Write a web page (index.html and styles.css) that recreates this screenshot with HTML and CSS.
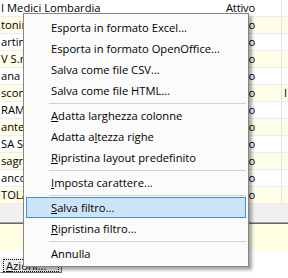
FILE: index.html
```html
<!DOCTYPE html>
<html lang="it">
<head>
    <meta charset="UTF-8">
    <title>Elenco clienti</title>
    <link rel="stylesheet" href="styles.css">
</head>
<body>
    <div class="grid">
        <div class="row"><span class="cell name">I Medici Lombardia</span><span class="cell state">Attivo</span><span class="cell extra"></span></div>
        <div class="row odd"><span class="cell name">toninelli Srl</span><span class="cell state">Attivo</span><span class="cell extra"></span></div>
        <div class="row"><span class="cell name">artina Spa</span><span class="cell state">Attivo</span><span class="cell extra"></span></div>
        <div class="row odd"><span class="cell name">V S.r.l.</span><span class="cell state">Attivo</span><span class="cell extra"></span></div>
        <div class="row"><span class="cell name">ana Sas</span><span class="cell state">Attivo</span><span class="cell extra"></span></div>
        <div class="row odd"><span class="cell name">sconti</span><span class="cell state">Attivo</span><span class="cell extra">I</span></div>
        <div class="row"><span class="cell name">RAMI</span><span class="cell state">Attivo</span><span class="cell extra"></span></div>
        <div class="row odd"><span class="cell name">anteghini</span><span class="cell state">Attivo</span><span class="cell extra"></span></div>
        <div class="row"><span class="cell name">SA Srl</span><span class="cell state">Attivo</span><span class="cell extra"></span></div>
        <div class="row odd"><span class="cell name">sagrato</span><span class="cell state">Attivo</span><span class="cell extra"></span></div>
        <div class="row"><span class="cell name">anco</span><span class="cell state">Attivo</span><span class="cell extra"></span></div>
        <div class="row odd"><span class="cell name">TOLA</span><span class="cell state">Attivo</span><span class="cell extra"></span></div>
    </div>
    <div class="footer-row"></div>
    <div class="splitter"></div>
    <div class="memo"></div>
    <div class="actions">
        <button class="btn"><span class="focus"><u>A</u>zioni...</span></button>
    </div>

    <div class="menu">
        <div class="item">Esporta in formato Excel...</div>
        <div class="item">Esporta in formato OpenOffice...</div>
        <div class="item">Salva come file CSV...</div>
        <div class="item">Salva come file HTML...</div>
        <div class="sep"></div>
        <div class="item"><u>A</u>datta larghezza colonne</div>
        <div class="item">Adatta a<u>l</u>tezza righe</div>
        <div class="item"><u>R</u>ipristina layout predefinito</div>
        <div class="sep"></div>
        <div class="item"><u>I</u>mposta carattere...</div>
        <div class="sep"></div>
        <div class="item selected"><u>S</u>alva filtro...</div>
        <div class="item"><u>R</u>ipristina filtro...</div>
        <div class="sep"></div>
        <div class="item">Annulla</div>
    </div>
</body>
</html>
```

FILE: styles.css
```css
body {
    margin: 0;
    padding: 0;
    width: 288px;
    height: 278px;
    overflow: hidden;
    background: #fff;
    font-family: "Open Sans", "Noto Sans", sans-serif;
    font-size: 11.2px;
    color: #000;
    position: relative;
}
.grid {
    display: flex;
    flex-direction: column;
}
.row {
    display: grid;
    grid-template-columns: 225px 57px 1fr;
    height: 17px;
    background: #fff;
}
.row.odd {
    background: #fffee8;
}
.cell {
    line-height: 16px;
    border-bottom: 1px solid #ececec;
    white-space: nowrap;
    overflow: hidden;
}
.name {
    padding-left: 1px;
}
.state {
    padding-left: 1px;
    border-right: 1px solid #e4e4e4;
    letter-spacing: -0.2px;
}
.extra {
    padding-left: 2px;
}
.footer-row {
    height: 18px;
    background: #f0f0f0;
}
.splitter {
    height: 1px;
    border-top: 1px solid #a0a0a0;
    background: #696969;
}
.memo {
    height: 26px;
    background: #fffee3;
}
.actions {
    padding-top: 6px;
}
.btn {
    display: block;
    width: 62px;
    height: 17px;
    padding: 2px;
    margin: 0;
    background: #f0f0f0;
    border: 1px solid;
    border-color: #fff #696969 #696969 #fff;
    font: inherit;
    text-align: left;
}
.focus {
    display: block;
    height: 11px;
    line-height: 11px;
    padding-left: 2px;
    border: 1px dotted #000;
}
.menu {
    position: absolute;
    left: 23px;
    top: 13px;
    width: 226px;
    height: 254px;
    padding: 3px 2px 0;
    box-sizing: border-box;
    border: 1px solid #858585;
    background: #fbfbfb;
    box-shadow: 3px 3px 3px rgba(0, 0, 0, 0.35);
    display: flex;
    flex-direction: column;
}
.item {
    flex-shrink: 0;
    height: 21px;
    padding-left: 24px;
    box-sizing: border-box;
    border: 1px solid transparent;
    line-height: 19px;
}
.item.selected {
    background: #cce4f7;
    border-color: #3e8ee0;
}
.sep {
    flex-shrink: 0;
    height: 1px;
    margin: 2px 0 1px 23px;
    background: #d2d2d2;
}
```
